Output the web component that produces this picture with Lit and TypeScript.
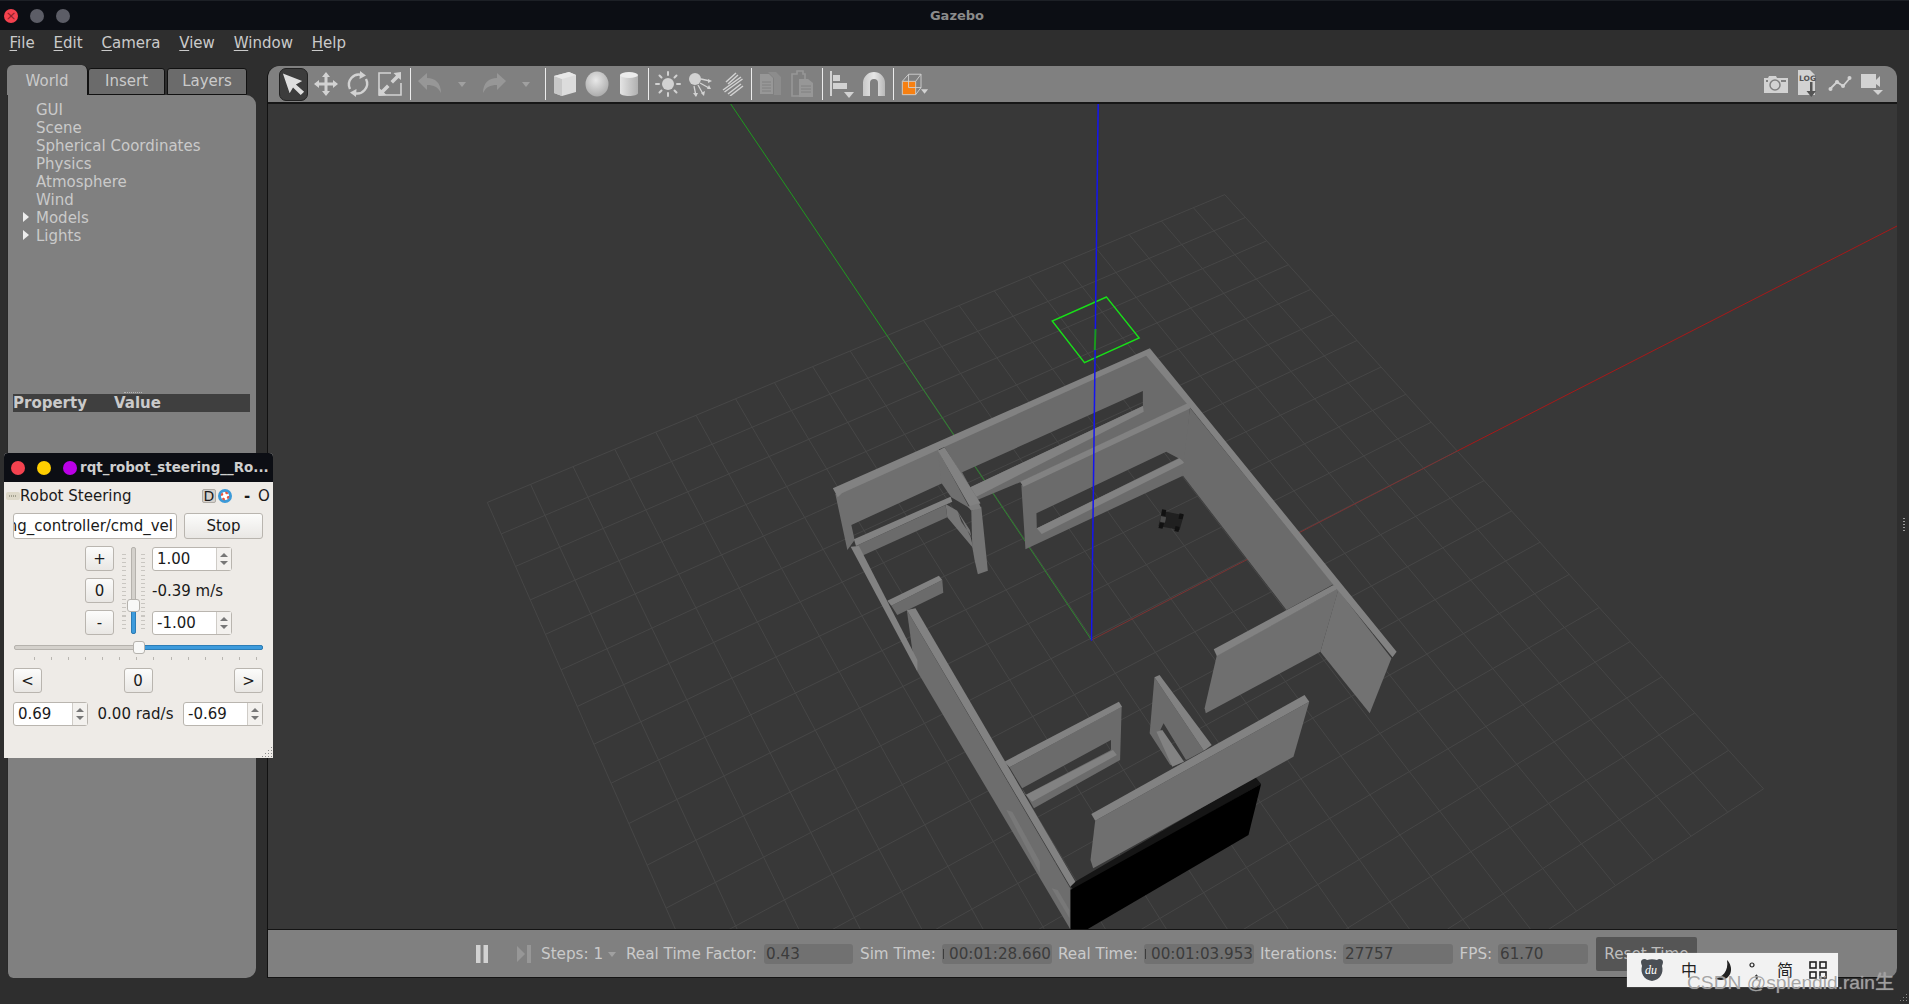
import { LitElement, html, css, svg } from "lit";
import { customElement } from "lit/decorators.js";

type P = [number, number];
const z7 = (p: P): P => [780 + p[0] / 2.45, 280 + p[1] / 3];
const z8 = (p: P): P => [820 + p[0] / 2.53, 560 + p[1] / 3];
const z12 = (p: P): P => [830 + p[0] / 3, 440 + p[1] / 3];
const str = (pts: P[]) => pts.map((p) => `${p[0].toFixed(1)},${p[1].toFixed(1)}`).join(" ");
const poly = (pts: P[], fill: string) => svg`<polygon points=${str(pts)} fill=${fill}></polygon>`;
const sub = (pts: P[]) => "M" + pts.map((p) => `${p[0].toFixed(1)} ${p[1].toFixed(1)}`).join("L") + "Z";
const holed = (outer: P[], inner: P[], fill: string) =>
  svg`<path d=${sub(outer) + sub(inner)} fill=${fill} fill-rule="evenodd"></path>`;

const O: P = [1091, 638];
const A: P = [401.5, -205.1];
const B: P = [-235.2, -347.9];
const G = 0.097;
const H = 0.1502;
const proj = (u: number, v: number): P => {
  const w = 1 + G * u + H * v;
  return [O[0] + (A[0] * u + B[0] * v) / w, O[1] + (A[1] * u + B[1] * v) / w];
};

const TOP = "#828282";
const FACE = "#6b6b6b";
const FACE2 = "#6f6f6f";

function scene() {
  const lines = [];
  for (let i = -10; i <= 10; i++) {
    const t = i / 10;
    const a = proj(t, -1), b = proj(t, 1), c = proj(-1, t), d = proj(1, t);
    lines.push(svg`<line x1=${a[0]} y1=${a[1]} x2=${b[0]} y2=${b[1]}></line>`);
    lines.push(svg`<line x1=${c[0]} y1=${c[1]} x2=${d[0]} y2=${d[1]}></line>`);
  }
  const m7 = (pts: P[]) => pts.map(z7);
  const m8 = (pts: P[]) => pts.map(z8);
  const m12 = (pts: P[]) => pts.map(z12);
  return html`<svg class="scene" viewBox="267 104 1630 825" preserveAspectRatio="none">
    <g stroke="#464646" stroke-width="1" fill="none">${lines}</g>
    <line x1="1091" y1="640" x2="1457" y2="451" stroke="#7c3232" stroke-width="1"></line>
    <line x1="1457" y1="451" x2="1897" y2="226" stroke="#a81818" stroke-width="1"></line>
    <line x1="1091" y1="640" x2="886" y2="335" stroke="#2e8a2e" stroke-width="1"></line>
    <line x1="886" y1="335" x2="730" y2="104" stroke="#1f9a1f" stroke-width="1"></line>
    <polygon points="1106,297 1051.7,321 1084,362.7 1138.7,338" fill="none" stroke="#18e018" stroke-width="1.4"></polygon>

    ${poly(m8([[1100, 650], [1115, 672], [640, 990], [630, 975]]), "#151515")}
    ${poly(m8([[1115, 672], [1083, 825], [675, 1108], [632, 1108], [632, 990]]), "#000")}

    ${poly(m12([[14, 162], [325, 25], [335, 130], [62, 255], [72, 300], [50, 330]]), FACE2)}
    ${poly(m12([[322, 30], [332, 128], [362, 172], [418, 205]]), FACE2)}
    ${poly(m12([[76, 318], [345, 195], [350, 232], [93, 348]]), FACE)}
    ${poly(m12([[70, 298], [360, 170], [365, 185], [76, 318]]), TOP)}
    ${holed(
      m7([[400, 498], [900, 222], [998, 372], [590, 605], [482, 660]]),
      m7([[445, 577], [888, 333], [888, 378], [465, 622]]),
      FACE
    )}
    ${poly(m7([[465, 622], [888, 378], [890, 395], [480, 650]]), TOP)}
    ${poly(m7([[905, 205], [128, 625], [140, 652], [150, 640], [900, 225]]), TOP)}

    ${holed(
      m12([[345, 192], [380, 212], [420, 290], [428, 325], [350, 232]]),
      m12([[382, 215], [418, 270], [422, 288], [392, 245]]),
      "#767676"
    )}
    ${poly(m12([[422, 212], [452, 200], [472, 392], [442, 403], [432, 360], [425, 320]]), "#747474")}
    ${poly(m12([[322, 32], [342, 22], [450, 190], [420, 204]]), TOP)}
    ${poly(m12([[412, 200], [445, 190], [452, 205], [422, 212]]), "#7c7c7c")}

    ${holed(
      m7([[590, 616], [1003, 383], [990, 585], [600, 808]]),
      m7([[627, 700], [945, 515], [975, 535], [628, 745]]),
      FACE
    )}
    ${poly(m7([[628, 745], [978, 535], [990, 548], [640, 762]]), TOP)}
    ${poly(m7([[1000, 368], [587, 605], [595, 620], [1005, 385]]), TOP)}
    ${poly(m7([[1003, 383], [1355, 913], [1240, 990], [985, 585]]), FACE)}

    ${poly(m8([[1310, 90], [1445, 295], [1390, 460], [1265, 275]]), "#727272")}
    ${poly(m8([[1312, 84], [1265, 275], [975, 460], [972, 445], [1003, 286]]), FACE2)}
    ${poly(m8([[1298, 75], [1312, 85], [1003, 288], [995, 268]]), TOP)}
    ${poly(m7([[905, 205], [1510, 1115], [1500, 1132], [1355, 915], [1003, 382], [895, 226]]), TOP)}

    ${poly(m8([[218, 150], [632, 985], [632, 1108], [245, 335], [232, 270]]), "#6d6d6d")}
    ${poly(m8([[470, 750], [485, 755], [555, 905], [555, 940]]), "#787878")}
    ${poly(m8([[585, 985], [600, 990], [630, 1050], [630, 1075]]), "#787878")}
    ${poly(m12([[182, 497], [335, 420], [338, 458], [200, 525]]), FACE)}
    ${poly(m12([[170, 482], [325, 407], [335, 420], [182, 497]]), TOP)}
    ${poly(m8([[76, -40], [97, -42], [245, 300], [245, 335]]), TOP)}
    ${poly(m8([[218, 150], [240, 145], [645, 965], [632, 980]]), TOP)}

    ${holed(
      m8([[478, 622], [762, 440], [758, 600], [540, 745], [510, 685]]),
      m8([[735, 540], [510, 685], [518, 705], [735, 570]]),
      FACE
    )}
    ${poly(m8([[520, 705], [740, 570], [750, 585], [535, 725]]), TOP)}
    ${poly(m8([[465, 605], [755, 425], [763, 440], [478, 622]]), TOP)}

    ${holed(
      m8([[845, 352], [970, 572], [930, 598], [885, 615], [833, 520]]),
      m8([[868, 490], [925, 600], [915, 605], [860, 510]]),
      FACE
    )}
    ${poly(m8([[850, 515], [865, 510], [920, 605], [890, 620]]), TOP)}
    ${poly(m8([[858, 345], [990, 555], [970, 572], [845, 352]]), TOP)}

    ${poly(m8([[695, 782], [1237, 425], [1197, 590], [690, 925], [683, 900]]), FACE2)}
    ${poly(m8([[1225, 405], [1237, 425], [695, 782], [685, 762]]), TOP)}

    ${poly(m7([[935, 692], [988, 706], [978, 750], [926, 738]]), "#202020")}
    ${poly(m7([[935, 688], [945, 690], [943, 708], [933, 706]]), "#111")}
    ${poly(m7([[978, 700], [988, 703], [985, 718], [975, 716]]), "#111")}
    ${poly(m7([[930, 728], [940, 730], [936, 746], [926, 744]]), "#111")}
    ${poly(m7([[968, 738], [978, 741], [975, 756], [965, 753]]), "#111")}
    ${poly(m7([[932, 708], [945, 712], [942, 728], [930, 725]]), "#4c4c4c")}

    <line x1="1097.7" y1="104" x2="1091" y2="640.7" stroke="#1414f0" stroke-width="1.5"></line>
    <line x1="1095" y1="329" x2="1094.3" y2="350" stroke="#1a9a1a" stroke-width="2"></line>
  </svg>`;
}

const ico = (w: number, h: number, body: unknown) =>
  html`<svg width=${w} height=${h} viewBox="0 0 ${w} ${h}">${body}</svg>`;

const L = "#d2d2d2";
const D = "#979797";

const icons = {
  arrow: ico(28, 28, svg`<path d="M3 3 L23 11 L16.5 14.5 L25 22 L21.5 25.5 L13.5 17.5 L10 23.5 Z" fill="#dedede"/>`),
  move: ico(26, 26, svg`<path d="M13 1 L17 6 H14.5 V11.5 H20 V9 L25 13 L20 17 V14.5 H14.5 V20 H17 L13 25 L9 20 H11.5 V14.5 H6 V17 L1 13 L6 9 V11.5 H11.5 V6 H9 Z" fill=${L}/>`),
  rotate: ico(26, 26, svg`<g fill="none" stroke=${L} stroke-width="2.4"><path d="M5 18 A10 10 0 0 1 17 4"/><path d="M21 8 A10 10 0 0 1 9 22"/></g><path d="M15 0 L21 4.5 L14.5 8 Z M11 26 L5 21.5 L11.5 18 Z" fill=${L}/>`),
  scale: ico(26, 26, svg`<path d="M14 2 H2 V24 H24 V12" fill="none" stroke=${L} stroke-width="1.6" /><path d="M24 1 L24 9 L21.5 7 L16 12.5 L13.5 10 L19 4.5 L16.5 2 Z M2 25 L2 17 L4.5 19 L10 13.5 L12.5 16 L7 21.5 L9.5 24 Z" fill=${L}/>`),
  undo: ico(26, 26, svg`<path d="M1 10 L10 2 V7 C18 7 24 12 24 22 C21 16 17 14 10 14 V19 Z" fill=${D}/>`),
  redo: ico(26, 26, svg`<path d="M25 10 L16 2 V7 C8 7 2 12 2 22 C5 16 9 14 16 14 V19 Z" fill=${D}/>`),
  box: ico(26, 26, svg`<path d="M2 5 L17 1 L24 4 L24 21 L10 25 L2 22 Z" fill="#dcdcdc"/><path d="M2 5 L10 8 V25 L2 22 Z" fill="#c8c8c8"/><path d="M2 5 L17 1 L24 4 L10 8 Z" fill="#e8e8e8"/>`),
  sphere: ico(26, 26, svg`<defs><radialGradient id="sg" cx="45%" cy="35%" r="70%"><stop offset="0" stop-color="#e8e8e8"/><stop offset="1" stop-color="#a8a8a8"/></radialGradient></defs><ellipse cx="13" cy="13" rx="11.5" ry="12.5" fill="url(#sg)"/>`),
  cyl: ico(24, 26, svg`<defs><linearGradient id="cg" x1="0" x2="1"><stop offset="0" stop-color="#e4e4e4"/><stop offset="1" stop-color="#b0b0b0"/></linearGradient></defs><path d="M3 4 V22 C3 26 21 26 21 22 V4 Z" fill="url(#cg)"/><ellipse cx="12" cy="4" rx="9" ry="3" fill="#ececec"/>`),
  sun: ico(26, 26, svg`<circle cx="13" cy="13" r="6" fill=${L}/><g stroke=${L} stroke-width="2" stroke-linecap="round"><path d="M13 1V4M13 22V25M1 13H4M22 13H25M4.5 4.5L6.5 6.5M19.5 19.5L21.5 21.5M4.5 21.5L6.5 19.5M19.5 6.5L21.5 4.5"/></g>`),
  spot: ico(26, 26, svg`<circle cx="8" cy="8" r="6" fill=${L}/><g stroke=${L} stroke-width="1.3"><path d="M14 8L23 10M13 12L22 17M11 14L16 23M7 15L9 25"/></g><path d="M25 10L21 12L21 8ZM24 18L20 18L22 14ZM17 25L14 22L18 20ZM9 26L6 22L11 22Z" fill=${L}/>`),
  dir: ico(24, 24, svg`<g stroke=${L} stroke-width="1.5" fill="none"><path d="M6 10L16 1M8 12L18 3M3 18L21 5M4.5 20L22.5 7M8 22L21 12M10 24L23 14"/></g>`),
  copy: ico(24, 26, svg`<path d="M1 3H10L14 7V23H1Z" fill=${D}/><path d="M9 1H17L22 6V24H15V7L10 2Z" fill="#8c8c8c"/><g stroke="#808080" stroke-width="1"><path d="M3 11H12M3 14H12M3 17H12M3 20H12"/></g>`),
  paste: ico(24, 28, svg`<path d="M1 4H6V1H12V4H14V26H1Z" fill="none" stroke=${D} stroke-width="1.6"/><path d="M8 9H17L22 13V27H8Z" fill=${D}/><g stroke="#808080" stroke-width="1"><path d="M10 16H20M10 19H20M10 22H20"/></g>`),
  align: ico(26, 28, svg`<path d="M2 1V26" stroke=${L} stroke-width="2"/><path d="M4 5H11V11H4ZM4 13H18V19H4Z" fill=${L}/><path d="M15 22H25L20 28Z" fill=${L}/>`),
  magnet: ico(26, 28, svg`<defs><linearGradient id="mg" x1="0" x2="1"><stop offset="0" stop-color="#c8c8c8"/><stop offset=".5" stop-color="#e6e6e6"/><stop offset="1" stop-color="#b8b8b8"/></linearGradient></defs><path d="M2 26V13 A11 11 0 0 1 24 13V26H17V13 A4 4 0 0 0 9 13V26Z" fill="url(#mg)"/>`),
  view: ico(36, 26, svg`<path d="M6 10H21V25H6Z" fill="#f78012"/><g fill="none" stroke=${L} stroke-width="1"><path d="M6 10L13 2H27V17L21 25M21 10L27 2M6 10V25H21V10Z M13 2V17H27"/></g><path d="M27 19H35L31 24Z" fill=${L}/>`),
  camera: ico(26, 20, svg`<path d="M1 4H5L6 2H13L14 4H25V19H1Z" fill=${L}/><circle cx="12" cy="11" r="5" fill="none" stroke="#808080" stroke-width="1.5"/><rect x="18" y="6" width="5" height="2" fill="#808080"/><rect x="3" y="6" width="2" height="2" fill="#808080"/>`),
  log: ico(22, 30, svg`<path d="M1 1H13L18 6V26H1Z" fill=${L}/><text x="2" y="12" font-family="DejaVu Sans" font-size="7.5" font-weight="700" fill="#555">LOG</text><path d="M13 13H15.5V22H19L14.3 28L9.5 22H13Z" fill="#555"/>`),
  plot: ico(24, 18, svg`<path d="M2 14L9 7L15 11L22 3" fill="none" stroke=${L} stroke-width="1.8"/><g fill=${L}><circle cx="2.5" cy="14" r="2"/><circle cx="9" cy="7" r="2"/><circle cx="15" cy="11" r="2"/><circle cx="21.5" cy="3" r="2"/></g>`),
  video: ico(24, 24, svg`<path d="M1 2H16V8L20 4V15L16 12V16H1Z" fill=${L}/><path d="M13 18H23L18 23Z" fill=${L}/>`),
  pause: ico(14, 18, svg`<rect x="1" y="0" width="4.5" height="18" fill=${L}/><rect x="8.5" y="0" width="4.5" height="18" fill=${L}/>`),
  step: ico(16, 18, svg`<path d="M1 1L9 9L1 17Z" fill=${D}/><rect x="11" y="0" width="4" height="18" fill=${D}/>`),
  du: ico(28, 26, svg`<path d="M3 5 C3 2 7 1 9 3 C12 2 16 2 19 3 C21 1 25 2 25 5 C25 7 24 8 24 9 C26 16 22 23 14 24 C6 23 2 16 4 9 C4 8 3 7 3 5Z" fill="#4a4f55"/><text x="7" y="17" font-family="Liberation Serif" font-style="italic" font-size="12" fill="#fff">du</text>`),
  moon: ico(20, 22, svg`<path d="M13 1 C20 8 18 20 7 21 C4 21 2 20 1 19 C8 19 15 12 13 1Z" fill="#222"/>`),
  punct: ico(12, 20, svg`<circle cx="3" cy="5" r="2" fill="none" stroke="#222" stroke-width="1.2"/><path d="M7 15 C9 15 9 18 7 20 C8 18 6 17 7 15Z" fill="#222" stroke="#222"/>`),
  grid: ico(18, 18, svg`<g fill="none" stroke="#222" stroke-width="1.6"><rect x="1" y="1" width="6" height="6"/><rect x="11" y="1" width="6" height="6"/><rect x="1" y="11" width="6" height="6"/><rect x="11" y="11" width="6" height="6"/></g>`),
  buoy: ico(16, 16, svg`<circle cx="8" cy="8" r="5.5" fill="#fff" stroke="#3b9ad9" stroke-width="3"/><circle cx="8" cy="8" r="3.4" fill="none" stroke="#e8553f" stroke-width="2" stroke-dasharray="2.7 2.6"/>`),
  pad: ico(14, 10, svg`<rect x="0" y="1" width="14" height="8" rx="2" fill="#ddd8c8"/><path d="M3 5H11" stroke="#665" stroke-dasharray="1 1"/>`),
};

@customElement("app-root")
export class AppRoot extends LitElement {
  static styles = css`
    :host {
      display: block;
      width: 1909px;
      height: 1004px;
      overflow: hidden;
      position: relative;
      background: #2e2e2e;
      font-family: "DejaVu Sans", sans-serif;
      font-size: 15px;
      color: #cacaca;
    }
    .titlebar {
      height: 30px;
      box-sizing: border-box;
      border-top: 1px solid #1d2026;
      background: #0c0e14;
      display: flex;
      align-items: center;
      position: relative;
      padding-left: 4px;
      gap: 12px;
    }
    .dot { width: 14px; height: 14px; border-radius: 50%; background: #5c5d66; }
    .dot.red { background: #f4424f; position: relative; }
    .dot.red::after {
      content: "×"; position: absolute; inset: 0; text-align: center;
      font-size: 13px; line-height: 14px; color: #8c1f28;
    }
    .title {
      position: absolute; left: 5px; right: 0; text-align: center;
      font-size: 13px; font-weight: 700; color: #8b8b8b;
    }
    .menu {
      height: 35px; display: flex; align-items: center; padding-left: 9.5px; gap: 18.9px;
      box-sizing: border-box; padding-bottom: 10px;
    }
    .menu u { text-underline-offset: 2px; }
    .main { display: flex; height: 913px; padding-left: 7px; gap: 11px; padding-right: 12px; }
    .left { width: 249px; display: flex; flex-direction: column; flex: none; }
    .tabs { display: flex; height: 30px; align-items: flex-end; }
    .tab {
      box-sizing: border-box; height: 27px; background: #6b6b6b; border: 1px solid #111;
      border-radius: 3px 3px 0 0; width: 77px; text-align: center; line-height: 24px; margin-right: 2px;
    }
    .tab.last { width: 80px; }
    .tab.on {
      height: 30px; width: 81px; background: #808080; border: none; border-right: 1px solid #111;
      border-radius: 6px 6px 0 0; line-height: 32px; margin-right: 0;
    }
    .panel {
      flex: 1; background: #808080; border-left: 1px solid #2a2a2a;
      border-radius: 0 10px 10px 6px; display: flex; flex-direction: column; position: relative;
      padding-top: 6px;
    }
    .tree { height: 291px; display: flex; flex-direction: column; box-sizing: border-box; flex: none; }
    .row { height: 18px; line-height: 18px; padding-left: 28px; position: relative; white-space: nowrap; }
    .row.more::before {
      content: ""; position: absolute; left: 15px; top: 3px;
      border-left: 6px solid #eee; border-top: 5.5px solid transparent; border-bottom: 5.5px solid transparent;
    }
    .handle { height: 2px; width: 18px; margin: 0 0 0 116px; border-top: 1px dotted #b5b5b5; box-sizing: border-box; flex: none; }
    .prophead {
      margin: 0 6px 0 5px; height: 18px; background: #3f3f3f; display: flex; font-weight: 700; line-height: 18px; flex: none;
    }
    .prophead span:first-child { width: 101px; }
    .right {
      flex: 1; display: flex; flex-direction: column; min-width: 0; border-radius: 12px 12px 10px 0;
      overflow: hidden; margin-top: 1px; border-left: 1px solid #111;
    }
    .toolbar {
      height: 38px; box-sizing: border-box; background: #808080; border-bottom: 2px solid #161616;
      display: flex; align-items: center; padding-left: 9px; flex: none; padding-right: 9px;
    }
    .tb { width: 32px; height: 34px; display: flex; align-items: center; justify-content: center; flex: none; }
    .tb.sel { background: #3c3c3c; border: 1px solid #222; border-radius: 7px; box-sizing: border-box; width: 29px; margin: 0 2px 0 2px; height: 33px; }
    .tri { width: 0; height: 0; border-left: 4px solid transparent; border-right: 4px solid transparent; border-top: 5px solid #a0a0a0; }
    .sep { width: 1px; height: 32px; background: #ececec; margin: 0 3px; flex: none; }
    .sep.wide { margin: 0 3px 0 4px; }
    .grow { flex: 1; }
    .view { flex: 1; min-height: 0; background: #383838; }
    .scene { display: block; width: 100%; height: 100%; }
    .bottom {
      height: 49px; box-sizing: border-box; background: #808080; border-top: 1px solid #141414; border-bottom: 1px solid #141414;
      display: grid; align-items: center; flex: none; padding: 1px 0 0 207px; font-size: 15.2px; white-space: nowrap;
      grid-template-columns: 41px 25px 67px 18px 138px 96px 82px 116px 86px 116px 83px 116.5px 38.5px 98px 101px;
    }
    .bottom > span { display: flex; align-items: center; }
    .val {
      height: 20px; line-height: 20px; background: #717171; border-radius: 3px; color: #3c3c3c;
      padding-left: 2px; box-sizing: border-box; overflow: hidden; position: relative;
    }
    .val.t { padding-left: 7px; }
    .val.t::before { content: ""; position: absolute; left: 1px; top: 5px; width: 1px; height: 10px; background: #3c3c3c; }
    .v89 { width: 89px; }
    .v90 { width: 90px; }
    .v110 { width: 110px; }
    .bottom > span.reset {
      width: 101px; height: 34px; background: #555; border-radius: 2px; justify-content: center; color: #bdbdbd;
    }
    .ime {
      position: absolute; left: 1627px; top: 953px; width: 211px; height: 34px; background: #f2f2f2;
      display: flex; align-items: center; box-shadow: 0 0 1px #999; color: #222; font-family: "Noto Sans CJK SC", sans-serif; font-size: 16px;
    }
    .ime > * { position: absolute; display: flex; }
    .mark {
      position: absolute; left: 1687px; top: 971px; font-size: 19.2px; line-height: 24px; white-space: nowrap;
      font-family: "Liberation Sans", "Noto Sans CJK SC", sans-serif; color: rgba(160, 160, 160, 0.95);
      text-shadow: 0 0 1px rgba(255,255,255,.5);
    }
    .grip {
      position: absolute; width: 8px; height: 8px;
      background: radial-gradient(circle, #8a8a8a 0.8px, transparent 1px) 0 0 / 3px 3px;
      clip-path: polygon(100% 0, 100% 100%, 0 100%);
    }
    .side { position: absolute; left: 1903px; top: 518px; width: 2px; height: 14px; background: repeating-linear-gradient(#999 0 1px, transparent 1px 3px); }

    .win {
      position: absolute; left: 4px; top: 453px; width: 269px; height: 305px; background: #eeebe7;
      color: #1a1a1a; font-size: 15px; border-radius: 4px 4px 0 0; overflow: hidden;
      display: flex; flex-direction: column;
    }
    .wt {
      height: 29px; background: #0c0e14; flex: none; display: flex; align-items: center; padding-left: 7px;
      color: #cfcfcf; font-weight: 700; font-size: 13.45px; white-space: nowrap;
    }
    .wt i { width: 14px; height: 14px; border-radius: 50%; margin-right: 12px; flex: none; }
    .wt i:nth-child(1) { background: #f4424f; }
    .wt i:nth-child(2) { background: #ffce00; }
    .wt i:nth-child(3) { background: #bb00e8; margin-right: 3px; }
    .wh { height: 27px; display: flex; align-items: center; padding-left: 2px; flex: none; position: relative; }
    .wh .nm { flex: 1; }
    .dbtn { width: 14px; height: 14px; background: #d4d1cd; border: 1px solid #b0aca6; border-radius: 2px; text-align: center; line-height: 13px; box-sizing: border-box; font-size: 14px; margin-right: 1px;}
    .wh b { font-weight: 700; margin-left: 9px; width: 10px; text-align: center; }
    .wh .o { margin-left: 6px; margin-right: 1px; width: 14px; overflow: hidden; }
    .wb { padding: 4px 10px 0 9px; display: flex; flex-direction: column; }
    .r1 { display: flex; gap: 7px; height: 26px; }
    .inp {
      width: 164px; box-sizing: border-box; background: #fff; border: 1px solid #b9b5af; border-radius: 3px;
      display: flex; justify-content: flex-end; align-items: center; overflow: hidden; padding-right: 3px; white-space: nowrap;
    }
    .btn {
      box-sizing: border-box; background: linear-gradient(#fcfcfb, #e9e7e4); border: 1px solid #b9b5af; border-radius: 3px;
      display: flex; align-items: center; justify-content: center; height: 25px; width: 29px; flex: none;
    }
    .stop { width: 79px; height: 26px; }
    .vel {
      display: grid; grid-template-columns: 72px 29px 38px 80px; grid-template-rows: 25px 25px 25px;
      row-gap: 7px; margin-top: 7px;
    }
    .vel > .btn { grid-column: 2; }
    .vs { grid-column: 3; grid-row: 1 / 4; position: relative; display: flex; justify-content: center; }
    .vs .tk { position: absolute; top: 8px; bottom: 6px; width: 4px; background: repeating-linear-gradient(#c9c6c1 0 1px, transparent 1px 4.1px); }
    .vs .tk.a { left: 8px; }
    .vs .tk.b { left: 27px; }
    .vs .tr { width: 5px; margin: 1px 0 0 0; height: 87px; border-radius: 2px; background: #d4d1cc; border: 1px solid #b5b2ad; position: relative; box-sizing: border-box; }
    .vs .fill { position: absolute; left: -1px; right: -1px; bottom: -1px; height: 24px; background: #3d9bdc; border: 1px solid #2c7db6; border-radius: 2px; box-sizing: border-box; }
    .vs .hd { position: absolute; left: -5px; bottom: 21px; width: 13px; height: 13px; border-radius: 3px; background: #f8f8f7; border: 1px solid #b5b2ad; box-sizing: border-box; }
    .spin {
      box-sizing: border-box; height: 24px; background: #fff; border: 1px solid #b9b5af; border-radius: 3px; display: flex; align-items: center; padding-left: 4px;
    }
    .vel .spin { margin-top: 1px; }
    .w75 { width: 75px; }
    .w80 { width: 80px; }
    .spin .t { flex: 1; }
    .spin .ar { width: 14px; height: 100%; border-left: 1px solid #cfccc7; background: #f3f1ee; display: flex; flex-direction: column; align-items: center; justify-content: center; gap: 4px; }
    .up { border-left: 4px solid transparent; border-right: 4px solid transparent; border-bottom: 4px solid #777; }
    .dn { border-left: 4px solid transparent; border-right: 4px solid transparent; border-top: 4px solid #777; }
    .vlab { display: flex; align-items: center; white-space: nowrap; grid-column: 4; }
    .hs { height: 12px; margin: 6px 0 0 1px; position: relative; width: 249px; }
    .hs .tr { position: absolute; left: 0; right: 0; top: 4px; height: 5px; background: #d4d1cc; border: 1px solid #b5b2ad; border-radius: 2px; box-sizing: border-box; }
    .hs .fill { position: absolute; left: 128px; right: 0; top: 4px; height: 5px; background: #3d9bdc; border: 1px solid #2c7db6; border-radius: 2px; box-sizing: border-box; }
    .hs .hd { position: absolute; left: 119px; top: 0; width: 12px; height: 13px; background: #f8f8f7; border: 1px solid #b5b2ad; border-radius: 3px; box-sizing: border-box; }
    .tks { display: flex; justify-content: space-between; margin: 4px 0 0 21px; width: 223px; height: 3px; }
    .tks span { width: 1px; height: 3px; background: #b9b6b1; }
    .r3 { display: flex; justify-content: space-between; margin-top: 8px; }
    .r4 { display: flex; align-items: center; margin-top: 9px; }
    .r4 .c { width: 95px; text-align: center; white-space: nowrap; flex: none; }
  `;

  private spin(v: string, cls: string) {
    return html`<div class="spin ${cls}"><span class="t">${v}</span><span class="ar"><span class="up"></span><span class="dn"></span></span></div>`;
  }

  render() {
    const tree = ["GUI", "Scene", "Spherical Coordinates", "Physics", "Atmosphere", "Wind"];
    const tb = (i: unknown) => html`<div class="tb">${i}</div>`;
    const tri = html`<div class="tb"><span class="tri"></span></div>`;
    const sep = html`<div class="sep"></div>`;
    return html`
      <div class="titlebar">
        <div class="dot red"></div><div class="dot"></div><div class="dot"></div>
        <div class="title">Gazebo</div>
      </div>
      <div class="menu">
        <span><u>F</u>ile</span><span><u>E</u>dit</span><span><u>C</u>amera</span><span><u>V</u>iew</span><span><u>W</u>indow</span><span><u>H</u>elp</span>
      </div>
      <div class="main">
        <div class="left">
          <div class="tabs">
            <div class="tab on">World</div><div class="tab">Insert</div><div class="tab last">Layers</div>
          </div>
          <div class="panel">
            <div class="tree">
              ${tree.map((t) => html`<div class="row">${t}</div>`)}
              <div class="row more">Models</div>
              <div class="row more">Lights</div>
            </div>
            <div class="handle"></div>
            <div class="prophead"><span>Property</span><span>Value</span></div>
          </div>
        </div>
        <div class="right">
          <div class="toolbar">
            <div class="tb sel">${icons.arrow}</div>
            ${tb(icons.move)}${tb(icons.rotate)}${tb(icons.scale)}<div class="sep wide"></div>
            ${tb(icons.undo)}${tri}${tb(icons.redo)}${tri}${sep}
            ${tb(icons.box)}${tb(icons.sphere)}${tb(icons.cyl)}${sep}
            ${tb(icons.sun)}${tb(icons.spot)}${tb(icons.dir)}${sep}
            ${tb(icons.copy)}${tb(icons.paste)}${sep}
            ${tb(icons.align)}${tb(icons.magnet)}${sep}
            ${tb(icons.view)}
            <div class="grow"></div>
            ${tb(icons.camera)}${tb(icons.log)}${tb(icons.plot)}${tb(icons.video)}
          </div>
          <div class="view">${scene()}</div>
          <div class="bottom">
            <span>${icons.pause}</span>
            <span>${icons.step}</span>
            <span>Steps: 1</span>
            <span><span class="tri"></span></span>
            <span>Real Time Factor:</span>
            <span class="val v89">0.43</span>
            <span>Sim Time:</span>
            <span class="val t v110">00:01:28.660</span>
            <span>Real Time:</span>
            <span class="val t v110">00:01:03.953</span>
            <span>Iterations:</span>
            <span class="val v110">27757</span>
            <span>FPS:</span>
            <span class="val v90">61.70</span>
            <span class="reset">Reset Time</span>
          </div>
        </div>
      </div>
      <div class="side"></div>
      <div class="grip" style="right:2px;bottom:3px"></div>

      <div class="win">
        <div class="wt"><i></i><i></i><i></i>rqt_robot_steering__Ro...</div>
        <div class="wh">
          ${icons.pad}<span class="nm">Robot Steering</span>
          <span class="dbtn">D</span>${icons.buoy}<b>-</b><span class="o">O</span>
        </div>
        <div class="wb">
          <div class="r1">
            <div class="inp"><span>steering_controller/cmd_vel</span></div>
            <div class="btn stop">Stop</div>
          </div>
          <div class="vel">
            <div class="btn" style="grid-row:1">+</div>
            <div class="btn" style="grid-row:2">0</div>
            <div class="btn" style="grid-row:3">-</div>
            <div class="vs">
              <span class="tk a"></span><span class="tk b"></span>
              <div class="tr"><div class="fill"></div><div class="hd"></div></div>
            </div>
            <div style="grid-column:4;grid-row:1">${this.spin("1.00", "w80")}</div>
            <div class="vlab" style="grid-row:2">-0.39 m/s</div>
            <div style="grid-column:4;grid-row:3">${this.spin("-1.00", "w80")}</div>
          </div>
          <div class="hs"><div class="tr"></div><div class="fill"></div><div class="hd"></div></div>
          <div class="tks">${Array.from({ length: 14 }, () => html`<span></span>`)}</div>
          <div class="r3"><div class="btn">&lt;</div><div class="btn">0</div><div class="btn">&gt;</div></div>
          <div class="r4">${this.spin("0.69", "w75")}<span class="c">0.00 rad/s</span>${this.spin("-0.69", "w80")}</div>
        </div>
        <div class="grip" style="right:1px;bottom:1px;width:11px;height:11px"></div>
      </div>

      <div class="ime">
        <span style="left:11px;top:4px">${icons.du}</span>
        <span style="left:54px;top:5px;line-height:23px">中</span>
        <span style="left:87px;top:6px">${icons.moon}</span>
        <span style="left:122px;top:7px">${icons.punct}</span>
        <span style="left:150px;top:5px;line-height:23px">简</span>
        <span style="left:182px;top:8px">${icons.grid}</span>
      </div>
      <div class="mark">CSDN @splendid.rain生</div>
    `;
  }
}
